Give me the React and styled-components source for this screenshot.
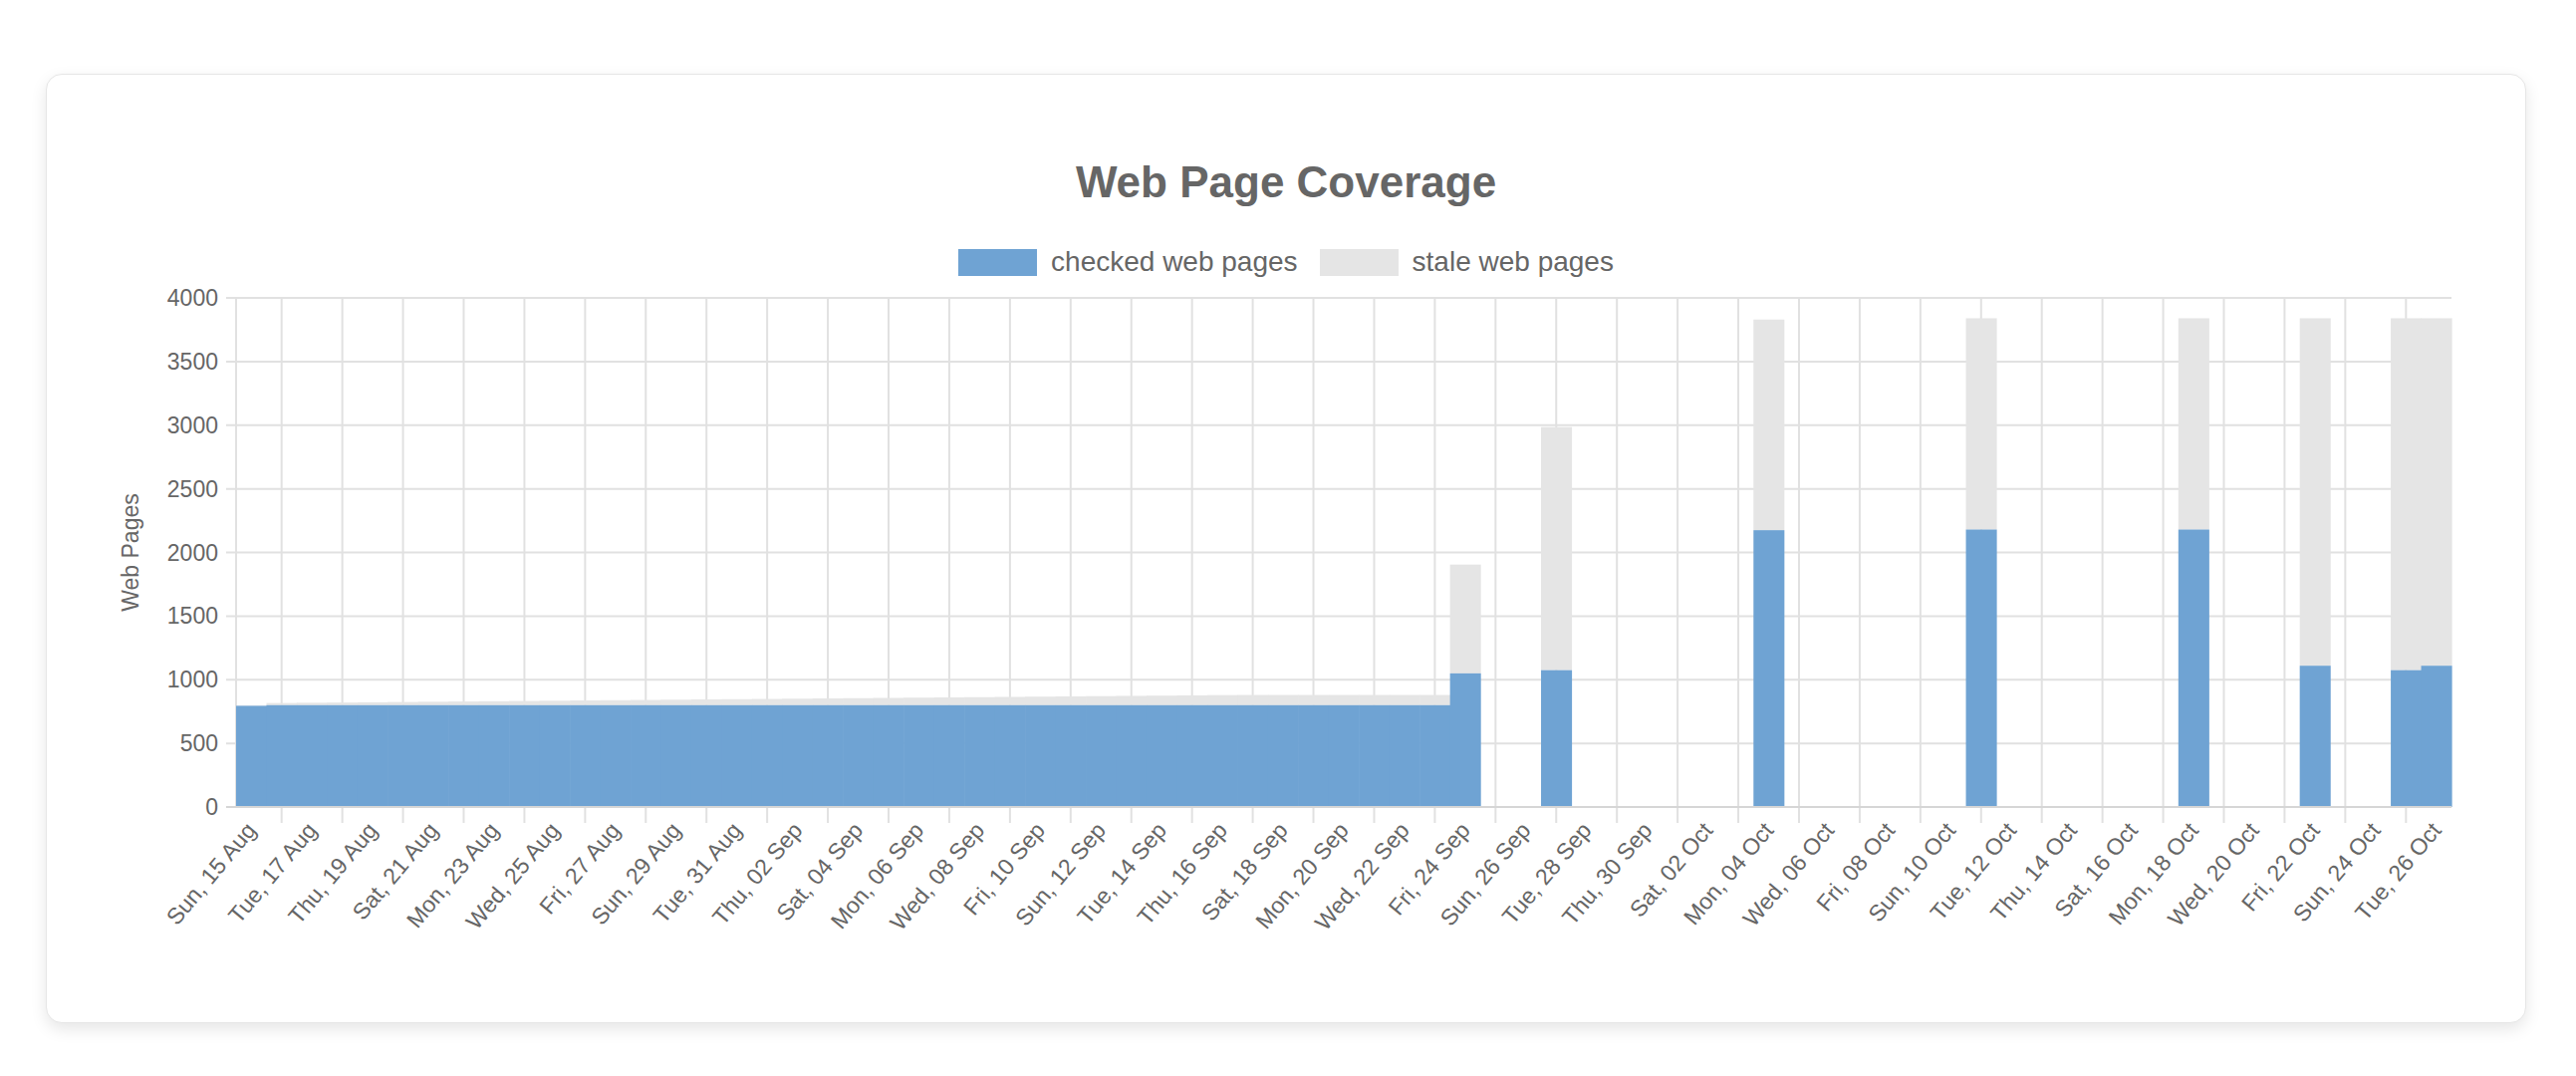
import React from "react";
import styled, { createGlobalStyle } from "styled-components";

const Global = createGlobalStyle`
  body { margin: 0; background: #fff; font-family: "Liberation Sans", Arial, sans-serif; }
`;

const Page = styled.div`
  width: 2586px;
  height: 1080px;
  padding: 74px 50px 0 46px;
  box-sizing: border-box;
`;

const Card = styled.div`
  width: 2490px;
  height: 953px;
  box-sizing: border-box;
  border: 1px solid #e6e6e6;
  border-radius: 16px;
  box-shadow: 0 6px 16px rgba(0, 0, 0, 0.1);
  background: #fff;
  display: flex;
  flex-direction: column;
  align-items: center;
  padding-top: 80px;
`;

const Title = styled.h1`
  margin: 0;
  font-size: 44px;
  line-height: 56px;
  font-weight: bold;
  color: #666;
`;

const Legend = styled.div`
  display: flex;
  gap: 22px;
  margin-top: 38px;
  height: 28px;
  align-items: center;
`;

const LegendItem = styled.div`
  display: flex;
  align-items: center;
  gap: 14px;
  font-size: 28px;
  color: #666;
`;

const Swatch = styled.span`
  width: 79px;
  height: 27px;
  background: ${(p) => p.color};
`;

const Chart = styled.svg`
  display: block;
  margin-top: 8px;
  align-self: flex-start;
`;

const BLUE = "#6fa3d3";
const GREY = "#e5e5e5";
const N = 73;
const X0 = 190;
const X1 = 2414;
const Y0 = 14;
const Y1 = 525;
const W = (X1 - X0) / N;
const yv = (v) => Y1 - (v / 4000) * (Y1 - Y0);

const days = ["Sun", "Mon", "Tue", "Wed", "Thu", "Fri", "Sat"];
const labels = Array.from({ length: N }, (_, i) => {
  const d = new Date(Date.UTC(2021, 7, 15 + i));
  return `${days[d.getUTCDay()]}, ${String(d.getUTCDate()).padStart(2, "0")} ${d.toLocaleString("en-US", { month: "short", timeZone: "UTC" })}`;
});

const data = Array.from({ length: N }, (_, i) => {
  if (i === 0) return [795, 800];
  if (i < 40) return [800, 815 + Math.min(65, i * 2)];
  return null;
});
Object.assign(data, {
  40: [1050, 1905],
  43: [1075, 2985],
  50: [2175, 3830],
  57: [2180, 3840],
  64: [2180, 3840],
  68: [1110, 3840],
  71: [1075, 3840],
  72: [1110, 3840],
});

function CoverageChart() {
  return (
    <Chart width="2488" height="700" viewBox="0 0 2488 700">
      {[0, 500, 1000, 1500, 2000, 2500, 3000, 3500, 4000].map((v) => (
        <g key={v}>
          <line x1={X0 - 10} x2={X1} y1={yv(v)} y2={yv(v)} stroke="#e1e1e1" strokeWidth="2" />
          <text x={X0 - 18} y={yv(v) + 8} textAnchor="end" fontSize="23" fill="#666">{v}</text>
        </g>
      ))}
      <line x1={X0} x2={X0} y1={Y0} y2={Y1} stroke="#e1e1e1" strokeWidth="2" />
      {labels.map((_, i) =>
        i % 2 === 1 ? (
          <line key={i} x1={X0 + W * (i + 0.5)} x2={X0 + W * (i + 0.5)} y1={Y0} y2={Y1 + 16} stroke="#e1e1e1" strokeWidth="2" />
        ) : null
      )}
      {data.map((d, i) =>
        d ? (
          <g key={i}>
            <rect x={X0 + W * i} width={W + 0.6} y={yv(d[1])} height={yv(d[0]) - yv(d[1])} fill={GREY} />
            <rect x={X0 + W * i} width={W + 0.6} y={yv(d[0])} height={Y1 - yv(d[0])} fill={BLUE} />
          </g>
        ) : null
      )}
      <line x1={X0 - 10} x2={X1} y1={Y1} y2={Y1} stroke="#d6d6d6" strokeWidth="2" />
      {labels.map((l, i) =>
        i % 2 === 0 ? (
          <text key={i} transform={`translate(${X0 + W * (i + 0.5) + 6},${Y1 + 24}) rotate(-50)`} textAnchor="end" fontSize="23" fill="#666">{l}</text>
        ) : null
      )}
      <text transform={`translate(92,${(Y0 + Y1) / 2}) rotate(-90)`} textAnchor="middle" fontSize="23" fill="#666">Web Pages</text>
    </Chart>
  );
}

export default function App() {
  return (
    <Page>
      <Global />
      <Card>
        <Title>Web Page Coverage</Title>
        <Legend>
          <LegendItem><Swatch color={BLUE} />checked web pages</LegendItem>
          <LegendItem><Swatch color={GREY} />stale web pages</LegendItem>
        </Legend>
        <CoverageChart />
      </Card>
    </Page>
  );
}
